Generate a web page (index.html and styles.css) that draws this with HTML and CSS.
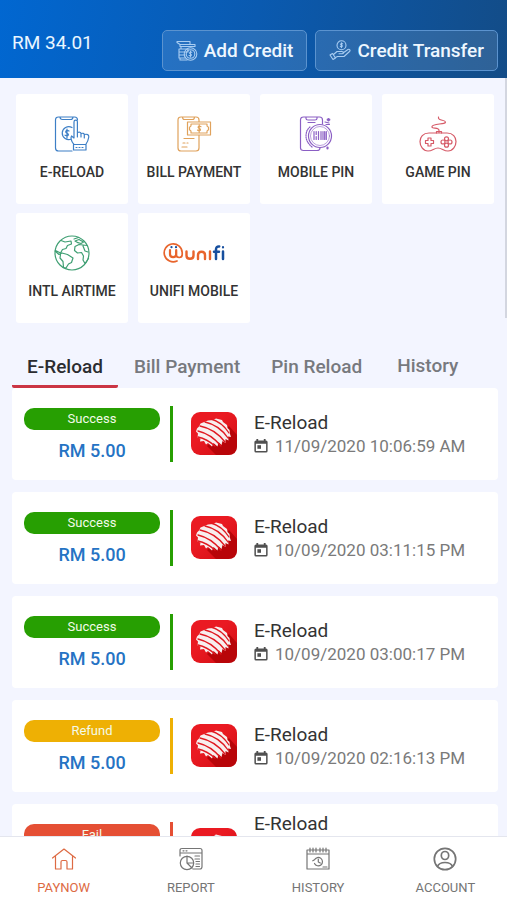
FILE: index.html
```
<!DOCTYPE html>
<html lang="en">
<head>
<meta charset="utf-8">
<meta name="viewport" content="width=device-width, initial-scale=1">
<title>PayNow</title>
<link rel="stylesheet" href="styles.css">
</head>
<body>
<svg class="defs" aria-hidden="true">
  <defs>
    <linearGradient id="red" x1="0" y1="0" x2="1" y2="1"><stop offset="0.4" stop-color="#ea1a22"/><stop offset="1" stop-color="#cf0d12"/></linearGradient>
    <symbol id="brand" viewBox="0 0 46 44">
      <rect width="46" height="43" rx="9" fill="url(#red)"/>
      <path d="M38 14 46 23v11q0 9-9 9H25l-9-9z" fill="#b80509"/>
      <path fill="#f8eeee" d="M17 8.500 22 8l3-1.500 6 1.500 1 2 4 3 .5 3 2 2 .5 4 1 3-3-.5.5 4-3-1.500v4l-3-2-1 4-3-3-1 4.500-4-3.500-1.500 3.500-4-3.500-2 1.500-2-3.500-4 .5.500-3-3-1 .5-4-2-2 1-3 2-2 1.500-3z"/>
      <g fill="none" stroke="#e01820" stroke-width="1.300" stroke-linecap="round">
        <path d="M20 7q11 3 18 14"/>
        <path d="M14 10q14 3 23 16"/>
        <path d="M9 14q15 3 25 16"/>
        <path d="M7 19q13 3 23 15"/>
        <path d="M7 25q9 2 17 9"/>
      </g>
    </symbol>
    <symbol id="cal" viewBox="0 0 14 14">
      <path fill="#505050" fill-rule="evenodd" d="M2.400 0h1.800v1.400h5.600V0h1.800v1.400H12q1.600 0 1.600 1.600v9q0 1.600-1.600 1.600H2Q.4 13.600.4 12V3Q.4 1.400 2 1.400h.4zM1.900 4.700v7.400h10.200V4.700z"/>
      <path fill="#505050" d="M3.400 6.200h3.600v3.600H3.400z"/>
    </symbol>
  </defs>
</svg>
<div class="app">
  <header class="top">
    <p class="balance">RM 34.01</p>
    <div class="actions">
      <button class="action" type="button">
        <svg viewBox="0 0 22 22" width="22" height="22" aria-hidden="true"><path d="M1 1.500h13v3H4l-3-2zM4 4.500v2h15V4.500h-5M3 9h9v3H3zM3 12v3h6M3 15v3h6M4 18v2h7M5 6.500V9"/><circle cx="14.500" cy="14" r="6.300"/><circle cx="14.500" cy="14" r="4.300"/><path d="M15.800 12.300c-2-1-3 1-1.300 1.700s.6 2.500-1.400 1.500M14.500 11v6"/></svg>
        <span>Add Credit</span>
      </button>
      <button class="action" type="button">
        <svg viewBox="0 0 22 22" width="22" height="22" aria-hidden="true"><circle cx="12.500" cy="5.200" r="4.500"/><path d="M13.600 3.800c-1.800-.8-2.600.9-1.100 1.400s.6 2-1.200 1.300M12.500 2.800v4.800M1 15l3 4.500 2.500-1.500L3.500 13.500zM4.500 14.500 8 11.500h5c2 0 2 2.300 0 2.300h-3M14 13l5-3.500c1.500-.8 2.700.8 1.500 2L15 16.500H8.500L6 17.800"/></svg>
        <span>Credit Transfer</span>
      </button>
    </div>
  </header>

  <main class="content">
    <nav class="tiles" aria-label="Services">
      <a class="tile blue" href="#">
        <svg viewBox="0 0 36 36" width="36" height="36" aria-hidden="true"><path d="M18 35H4.500Q1.500 35 1.500 32V4Q1.500 1 4.500 1h16Q23.500 1 23.500 4M6 1q0 2.500 2.500 2.500h8Q19 3.500 19 1M18 11.500a6.500 6.500 0 1 0-.5 11.500M15 15c-3-1.700-4.500 1.200-2 2.200s1.500 3.500-2 2M13 13v9"/><path fill="#fff" d="M20 28.500c-3-3-3.500-7-2.500-8.500l2.500 2V6q0-1.800 1.700-1.800T23.400 6v10.500q3-1 3.600 1 2.800-.8 3.300 1 4.700-1 4.500 2.500-.6 4-3 7.500zM19.500 28.500H32V34H19.500zM23.400 16v5M27 17.500V21M30.300 18.500V22"/><path d="M22 31.500h1M25 31.500h1M28 31.500h1"/></svg>
        <span>E-RELOAD</span>
      </a>
      <a class="tile orange" href="#">
        <svg viewBox="0 0 36 36" width="36" height="36" aria-hidden="true"><path d="M23 19v13q0 3-3 3H5Q2 35 2 32V4Q2 1 5 1h15q3 0 3 3v2M6.500 1q0 2.500 2 2.500h8Q18.500 3.500 18.500 1M8 22.500h10M7 27h2M11 27h1M6 31h5"/><path fill="#fff" d="M11.500 6h23v13h-23z"/><path d="M15 8h16v1.500q0 1.500 1.500 1.500v3q-1.500 0-1.500 1.500V17H15v-1.500q0-1.500-1.500-1.500v-3Q15 11 15 9.500zM25 10.700c-2.500-1.400-4 .8-1.800 1.700s1.500 3-1.700 1.700M23.200 9v7"/></svg>
        <span>BILL PAYMENT</span>
      </a>
      <a class="tile purple" href="#">
        <svg viewBox="0 0 36 36" width="36" height="36" aria-hidden="true"><path d="M22 32q0 2.500-3 2.500H5.500Q2.500 34.500 2.500 32V4Q2.500 1 5.500 1h16q3 0 3 3v4M8 1v1.500Q8 4 10 4h7q2 0 2-1.500V1M10 6.500h7M27 6l4 1M28 8.500h3.500"/><path stroke-dasharray="1 1.200" d="M12 11q-4 3-4 9t6 11"/><circle cx="22" cy="20" r="11.500" fill="#fff"/><circle cx="22" cy="20" r="9.500" stroke-width=".6"/><path stroke-width="1.200" d="M16 15.500v8M18.200 15.500v3M18.200 20.500v3M20.500 15.500v8M23 15.500v8M25 15.500v8M26.700 15.500v8M28.300 15.500v8"/><path stroke-width="2.200" d="M30.500 3v1.500M29.700 3.700h1.600M29.500 31.500v1"/></svg>
        <span>MOBILE PIN</span>
      </a>
      <a class="tile red" href="#">
        <svg viewBox="0 0 40 36" width="40" height="36" aria-hidden="true"><path d="M20.500 1c-1 4 6.500 2.500 7 5s-13 1.500-13.500 4.500 7 0 7 4v2M18.500 17v-1.500h5V17"/><path d="M11 17h18c6 0 9 4 9 8.500S35 35 30 35c-4.500 0-6-3-10-3s-5.500 3-10 3c-5 0-8-5-8-9.500S5 17 11 17zM10 22h3v2.500h2.500v3H13V30h-3v-2.500H7.500v-3H10z"/><circle cx="28.500" cy="22.800" r="2"/><circle cx="28.500" cy="29.200" r="2"/><circle cx="25" cy="26" r="2"/><circle cx="32" cy="26" r="2"/></svg>
        <span>GAME PIN</span>
      </a>
      <a class="tile green" href="#">
        <svg viewBox="0 0 38 36" width="38" height="36" aria-hidden="true"><circle cx="19" cy="18" r="17"/><path d="M8 5.500l4 1.500 6-1 .5 3-4 1.500-1.500 3-3.500 1-2 3.500-2-1-3-1.500M2 16l4 3.500 3-1.500 5.500 1.500 5.500 3.500-1.500 4.500-3 1.500-2.500 4-2.500-.5-.5-6-3-3.500.5-3.500M21 4l4.500-1.500M22 6l4-1.500 4.500 2.500-2.500 1.500-3-.8zM22 11.500l4-2 8 1M22 11.500l-.5 4 3 2.500 4-.5 2 3.500-.5 4 2 3.500 3.500-5M30 11l2 5 3 1"/></svg>
        <span>INTL AIRTIME</span>
      </a>
      <a class="tile unifi" href="#">
        <svg viewBox="0 0 62 36" width="62" height="36" aria-hidden="true"><g stroke="#e8642c"><path stroke-width="1.700" d="M14 26A9 9 0 1 1 19.200 17.500v2q0 3-3 3t-3-3v-3"/><path stroke-width="2.200" d="M7 15v4q0 3.200 3.100 3.200t3.100-3.200v-4"/><path stroke-width="2.400" d="M23.500 16.500v4q0 3.300 3.500 3.300t3.500-3.300v-4M35 24v-4q0-3.300 3.500-3.300t3.500 3.300v4M47 16.500V24"/></g><g stroke="#174f9e" stroke-width="2.500"><path d="M53 24V14.500q0-3.300 3.200-3M51 16.800h5M60 16.500V24"/><path d="M8.500 12v.2M13 12v.2M60 12.200v.2" stroke-width="2.200"/></g></svg>
        <span>UNIFI MOBILE</span>
      </a>
    </nav>

    <div class="tabs" role="tablist">
      <button class="tab active" type="button" role="tab" aria-selected="true">E-Reload</button>
      <button class="tab" type="button" role="tab" aria-selected="false">Bill Payment</button>
      <button class="tab" type="button" role="tab" aria-selected="false">Pin Reload</button>
      <button class="tab last" type="button" role="tab" aria-selected="false">History</button>
    </div>

    <ul class="list">
      <li class="card success">
        <div class="status"><span class="pill">Success</span><span class="amount">RM 5.00</span></div>
        <svg class="brand" aria-hidden="true"><use href="#brand"/></svg>
        <div class="info"><h2>E-Reload</h2><p><svg class="cal" aria-hidden="true"><use href="#cal"/></svg>11/09/2020 10:06:59 AM</p></div>
      </li>
      <li class="card success">
        <div class="status"><span class="pill">Success</span><span class="amount">RM 5.00</span></div>
        <svg class="brand" aria-hidden="true"><use href="#brand"/></svg>
        <div class="info"><h2>E-Reload</h2><p><svg class="cal" aria-hidden="true"><use href="#cal"/></svg>10/09/2020 03:11:15 PM</p></div>
      </li>
      <li class="card success">
        <div class="status"><span class="pill">Success</span><span class="amount">RM 5.00</span></div>
        <svg class="brand" aria-hidden="true"><use href="#brand"/></svg>
        <div class="info"><h2>E-Reload</h2><p><svg class="cal" aria-hidden="true"><use href="#cal"/></svg>10/09/2020 03:00:17 PM</p></div>
      </li>
      <li class="card refund">
        <div class="status"><span class="pill">Refund</span><span class="amount">RM 5.00</span></div>
        <svg class="brand" aria-hidden="true"><use href="#brand"/></svg>
        <div class="info"><h2>E-Reload</h2><p><svg class="cal" aria-hidden="true"><use href="#cal"/></svg>10/09/2020 02:16:13 PM</p></div>
      </li>
      <li class="card fail">
        <div class="status"><span class="pill">Fail</span></div>
        <svg class="brand" aria-hidden="true"><use href="#brand"/></svg>
        <div class="info"><h2>E-Reload</h2></div>
      </li>
    </ul>
    <div class="thumb"></div>
  </main>

  <nav class="bottom" aria-label="Main">
    <a class="item current" href="#">
      <svg viewBox="0 0 24 24" width="24" height="24" aria-hidden="true"><path d="M.500 11 12 2l11.500 9M3.500 9.500V22H9v-7q0-1.500 1.500-1.500h3Q15 13.500 15 15v7h5.500V9.500"/></svg>
      <span>PAYNOW</span>
    </a>
    <a class="item" href="#">
      <svg viewBox="0 0 24 24" width="24" height="24" aria-hidden="true"><path d="M1 9V3.500Q1 1.500 3 1.500h18q2 0 2 2v16q0 2.500-2 2.500h-7M1 6h22M4 3.800h1M7 3.800h1M16 9h4.500M16 12h4.500M17 14.500h3.500M17 17h3.500M17 19.500h3.500M8 9v7l5 5M8 16h6.500"/><circle cx="8" cy="16" r="6.700"/></svg>
      <span>REPORT</span>
    </a>
    <a class="item" href="#">
      <svg viewBox="0 0 24 24" width="24" height="24" aria-hidden="true"><path d="M1 3h22v19H1zM1 7h22M4 1v4M7 1v4M10 1v4M14 1v4M17 1v4M20 1v4M8.500 16.500a4.200 4.200 0 1 0 0-3.700l-1.700 1M12.300 12v3l2 1M17 20h4"/></svg>
      <span>HISTORY</span>
    </a>
    <a class="item" href="#">
      <svg class="bold" viewBox="0 0 24 24" width="24" height="24" aria-hidden="true"><circle cx="12" cy="12" r="10.700"/><path d="M4.500 19.500q1.500-4 7.500-4t7.500 4"/><ellipse cx="12" cy="8.500" rx="3.700" ry="4"/></svg>
      <span>ACCOUNT</span>
    </a>
  </nav>
</div>
</body>
</html>
```
FILE: styles.css
```
* { box-sizing: border-box; }

body {
  margin: 0;
  font-family: Roboto, "Liberation Sans", sans-serif;
  color: #333;
  background: #f3f5ff;
}

h2, p, ul { margin: 0; padding: 0; font-weight: 400; }
a { color: inherit; text-decoration: none; }
button { font-family: inherit; cursor: pointer; }
svg { fill: none; stroke: currentColor; stroke-linecap: round; stroke-linejoin: round; flex: none; }

.defs { position: absolute; width: 0; height: 0; }

.app { display: flex; flex-direction: column; height: 100vh; }

.top {
  display: flex;
  justify-content: space-between;
  align-items: flex-start;
  gap: 12px;
  padding: 30px 9px 7px 12px;
  color: #e9f6ff;
  background: linear-gradient(100deg, #0167d1 0%, #0a5ab0 50%, #134c87 100%);
}

.balance { font-size: 19px; line-height: 26px; white-space: nowrap; }

.actions { display: flex; gap: 8px; }

.action {
  display: flex;
  align-items: center;
  gap: 6px;
  height: 41px;
  padding: 0 13px;
  border: 1px solid #5b93cf;
  border-radius: 5px;
  background: rgba(255, 255, 255, 0.12);
  color: #eef7ff;
  font-size: 19px;
  font-weight: 500;
  white-space: nowrap;
}

.action svg { stroke: #a9cdf2; stroke-width: 1.1; }

.content { position: relative; flex: 1; min-height: 0; overflow: hidden; }

.thumb { position: absolute; top: 0; right: 0; width: 2px; height: 240px; background: #d3d6e0; }

.tiles {
  display: grid;
  grid-template-columns: repeat(4, 1fr);
  gap: 9px 10px;
  padding: 16px 13px 22px 16px;
}

.tile {
  display: flex;
  flex-direction: column;
  align-items: center;
  gap: 11px;
  height: 110px;
  padding-top: 22px;
  border-radius: 3px;
  background: #fff;
  font-size: 14px;
  line-height: 19px;
  font-weight: 500;
  white-space: nowrap;
}

.tile svg { stroke-width: 1.2; }
.blue svg { color: #3d7fc6; }
.orange svg { color: #e0a25c; }
.purple svg { color: #8b5fc4; }
.red svg { color: #d65b68; }
.green svg { color: #3f9f73; }

.tabs { display: flex; gap: 1px; padding: 0 12px; }

.tab {
  height: 43px;
  padding: 2px 15px 0;
  border: 0;
  border-bottom: 3px solid transparent;
  border-radius: 2px;
  background: none;
  color: #77797e;
  font-size: 19px;
  font-weight: 500;
  white-space: nowrap;
}

.tab.active { color: #2b2c30; border-color: #cb3544; }
.tab.last { margin-left: 4px; padding-top: 0; }

.list {
  display: flex;
  flex-direction: column;
  gap: 12px;
  padding: 0 9px 12px 12px;
  list-style: none;
}

.card {
  display: flex;
  align-items: center;
  flex: none;
  height: 92px;
  padding: 0 12px;
  border-radius: 4px;
  background: #fff;
}

.status {
  display: flex;
  flex-direction: column;
  align-items: center;
  gap: 9px;
  width: 149px;
  height: 56px;
  padding: 2px 10px 0 0;
  border-right: 3px solid var(--tone);
}

.pill {
  width: 100%;
  border-radius: 10px;
  background: var(--tone);
  color: #f3fbe9;
  font-size: 13px;
  line-height: 22px;
  text-align: center;
}

.success { --tone: #279f02; }
.refund { --tone: #eeb004; }
.fail { --tone: #e54f34; }

.amount { color: #2573c4; font-size: 18px; line-height: 24px; font-weight: 500; }

.brand { width: 46px; height: 44px; margin: 0 17px 0 18px; stroke: none; }

.info h2 { font-size: 19px; line-height: 24px; }

.info p {
  display: flex;
  align-items: center;
  gap: 7px;
  color: #7a7a7a;
  font-size: 17px;
  line-height: 23px;
  white-space: nowrap;
}

.fail .info { align-self: flex-start; padding-top: 8px; }

.cal { width: 14px; height: 14px; stroke: none; }

.bottom {
  display: grid;
  grid-template-columns: repeat(4, 1fr);
  gap: 4px;
  flex: none;
  height: 64px;
  padding-left: 2px;
  border-top: 1px solid #e4e6ee;
  background: #fff;
}

.item {
  display: flex;
  flex-direction: column;
  align-items: center;
  gap: 8px;
  padding-top: 10px;
  color: #757575;
  font-size: 13px;
  line-height: 18px;
}

.item.current { color: #dd6a43; }
.item svg { stroke-width: 1.2; }
.item .bold { stroke-width: 1.7; }
```
